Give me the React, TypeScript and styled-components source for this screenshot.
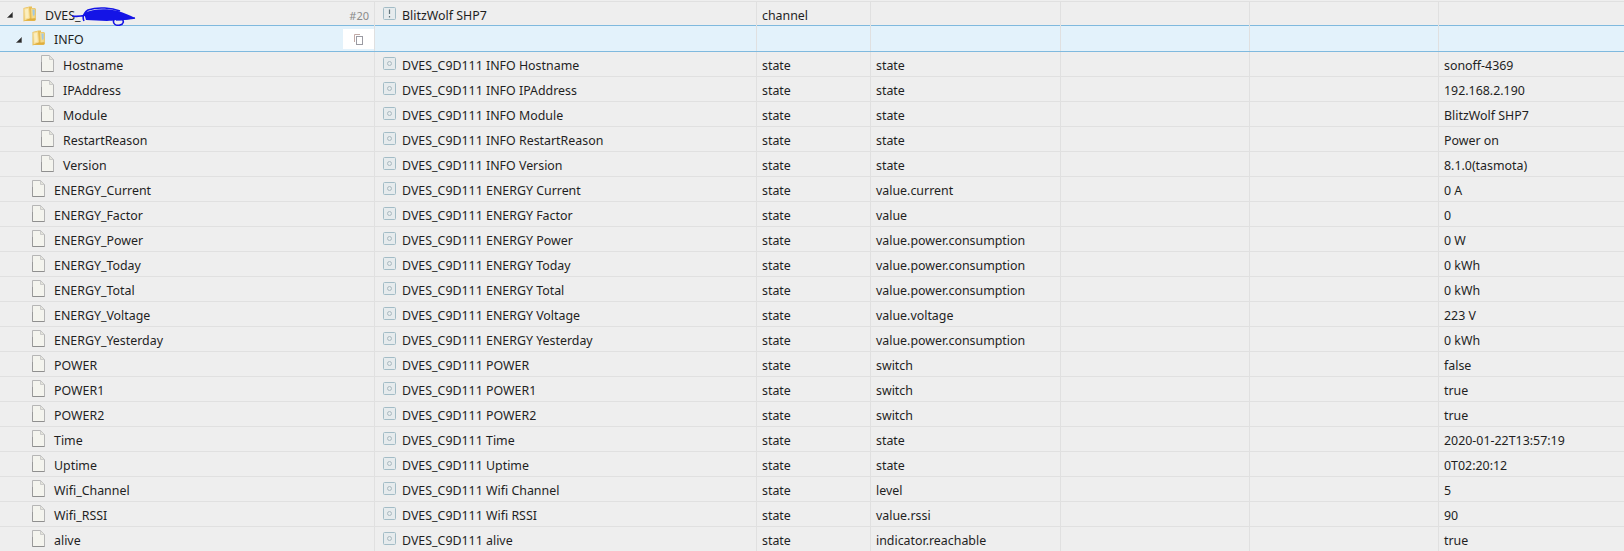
import styled, { createGlobalStyle } from "styled-components";

type Item = {
  name: string;
  indent: number;
  label: string;
  role: string;
  value: string;
};

const Info = (name: string, role: string, value: string): Item => ({
  name,
  indent: 41,
  label: "DVES_C9D111 INFO " + name,
  role,
  value,
});

const State = (name: string, role: string, value: string): Item => ({
  name,
  indent: 32,
  label: "DVES_C9D111 " + name.replace("_", " "),
  role,
  value,
});

const items: Item[] = [
  Info("Hostname", "state", "sonoff-4369"),
  Info("IPAddress", "state", "192.168.2.190"),
  Info("Module", "state", "BlitzWolf SHP7"),
  Info("RestartReason", "state", "Power on"),
  Info("Version", "state", "8.1.0(tasmota)"),
  State("ENERGY_Current", "value.current", "0 A"),
  State("ENERGY_Factor", "value", "0"),
  State("ENERGY_Power", "value.power.consumption", "0 W"),
  State("ENERGY_Today", "value.power.consumption", "0 kWh"),
  State("ENERGY_Total", "value.power.consumption", "0 kWh"),
  State("ENERGY_Voltage", "value.voltage", "223 V"),
  State("ENERGY_Yesterday", "value.power.consumption", "0 kWh"),
  State("POWER", "switch", "false"),
  State("POWER1", "switch", "true"),
  State("POWER2", "switch", "true"),
  State("Time", "state", "2020-01-22T13:57:19"),
  State("Uptime", "state", "0T02:20:12"),
  State("Wifi_Channel", "level", "5"),
  State("Wifi_RSSI", "value.rssi", "90"),
  State("alive", "indicator.reachable", "true"),
];

const Arrow = () => (
  <ArrowSvg width="6" height="6" viewBox="0 0 6 6">
    <path d="M5.5 0.5V5.5H0.5Z" fill="#2a2a2a" stroke="#555" strokeWidth="0.6" />
  </ArrowSvg>
);

const Folder = () => (
  <IconSvg width="13" height="16" viewBox="0 0 13 16">
    <path d="M0.5 2L6.5 0.5H9V2H12L12.8 3V13.5L11.5 15H2L0.5 15.5Z" fill="#e8bd55" />
    <path d="M1 2.5L6 1.2L7 12.5L1.5 14.5Z" fill="#f6dd96" />
    <path d="M2 3.5L5 2.8L5.8 11.5L2.5 12.8Z" fill="#fbeebf" />
    <path d="M8 2.5H11.8V12L8.6 13.2Z" fill="#f2d98c" />
    <path d="M9.4 3.5H11.6V9L10 10Z" fill="#9fc8e4" />
    <path d="M1.5 14.5L7 12.5L12.5 12.5V14.5H2Z" fill="#dfae3f" />
  </IconSvg>
);

const FileIcon = () => (
  <IconSvg width="13" height="17" viewBox="0 0 13 17">
    <path d="M0.5 0.5H8.5L12.5 4.5V16.5H0.5Z" fill="#f4f4ee" stroke="#b5b5b5" />
    <path d="M8.5 0.5V4.5H12.5Z" fill="#e4e4dc" stroke="#c4c4c4" strokeWidth="0.8" />
    <path d="M0.5 16.5H12.5" stroke="#8f8f8f" />
    <path d="M0.5 7V16.5" stroke="#9a9a9a" />
  </IconSvg>
);

const StateIcon = () => (
  <RowIcon width="13" height="13" viewBox="0 0 13 13">
    <rect x="0.5" y="0.5" width="12" height="12" rx="1" fill="#e6ebed" stroke="#a3bcc6" />
    <circle cx="6.5" cy="6.5" r="2" fill="none" stroke="#a9b9c0" />
  </RowIcon>
);

const ChannelIcon = () => (
  <RowIcon width="13" height="13" viewBox="0 0 13 13">
    <rect x="0.5" y="0.5" width="12" height="12" rx="1" fill="#e6ebed" stroke="#a3bcc6" />
    <path d="M6.5 2.5V7" stroke="#63757c" strokeWidth="1.2" />
    <path d="M6.5 9V10.5" stroke="#63757c" strokeWidth="1.2" />
  </RowIcon>
);

const CopyIcon = () => (
  <svg width="9" height="11" viewBox="0 0 9 11">
    <path d="M0.5 8V0.5H6" fill="none" stroke="#c2aaa6" />
    <rect x="2.5" y="2.5" width="6" height="8" fill="none" stroke="#9a9aa2" />
  </svg>
);

const Scribble = () => (
  <ScribbleSvg width="64" height="20" viewBox="0 0 64 20">
    <path d="M12 6C20 2 34 1 46 4C52 6 58 8 63 11C54 13 48 14 44 13C36 15 24 13 14 13Z" fill="#1414e6" />
    <path
      d="M0 9C6 10 10 9 14 8M12 14C10 10 12 5 16 3C26 -0.5 40 1 48 4M42 12C40 17 44 19 48 18C52 17 52 14 50 12M44 13C50 12 58 12 63 11"
      fill="none"
      stroke="#1414e6"
      strokeWidth="1.6"
    />
  </ScribbleSvg>
);

export default function App() {
  return (
    <>
      <GlobalStyle />
      <Table>
        <Row>
          <NameCell $indent={7}>
            <Arrow />
            <Gap $width={10} />
            <Folder />
            <RowName>DVES_</RowName>
            <Scribble />
            <RowId>#20</RowId>
          </NameCell>
          <LabelCell>
            <ChannelIcon />
            BlitzWolf SHP7
          </LabelCell>
          <TypeCell>channel</TypeCell>
          <RoleCell />
          <EmptyCell />
          <EmptyCell />
          <ValueCell />
        </Row>
        <Row $selected>
          <NameCell $indent={16}>
            <Arrow />
            <Gap $width={10} />
            <Folder />
            <RowName>INFO</RowName>
            <CopyButton>
              <CopyIcon />
            </CopyButton>
          </NameCell>
          <LabelCell />
          <TypeCell />
          <RoleCell />
          <EmptyCell />
          <EmptyCell />
          <ValueCell />
        </Row>
        {items.map((item) => (
          <Row key={item.name}>
            <NameCell $indent={item.indent}>
              <FileIcon />
              <RowName>{item.name}</RowName>
            </NameCell>
            <LabelCell>
              <StateIcon />
              {item.label}
            </LabelCell>
            <TypeCell>state</TypeCell>
            <RoleCell>{item.role}</RoleCell>
            <EmptyCell />
            <EmptyCell />
            <ValueCell>{item.value}</ValueCell>
          </Row>
        ))}
      </Table>
    </>
  );
}

const GlobalStyle = createGlobalStyle`
  html, body {
    margin: 0;
    padding: 0;
    height: 100%;
    overflow: hidden;
    background-color: #eeeeee;
  }
  body {
    font-family: "Noto Sans", "Open Sans", sans-serif;
    font-size: 12.4px;
    color: #1f1f1f;
  }
`;

const Table = styled.div`
  margin-top: 1px;
  border-top: 1px solid #e0e0e0;
`;

const Row = styled.div<{ $selected?: boolean }>`
  display: grid;
  grid-template-columns: 375px 382px 114px 190px 189px 189px 185px;
  box-sizing: border-box;
  height: ${(p) => (p.$selected ? "27px" : "25px")};
  margin-top: ${(p) => (p.$selected ? "-2px" : "0")};
  border-bottom: 1px solid ${(p) => (p.$selected ? "#7fb9de" : "#e0e0e0")};
  border-top: ${(p) => (p.$selected ? "1px solid #7fb9de" : "none")};
  background-color: ${(p) => (p.$selected ? "#e3f2fb" : "transparent")};
`;

const Cell = styled.div`
  display: flex;
  align-items: center;
  box-sizing: border-box;
  padding-left: 5px;
  padding-top: 2px;
  border-right: 1px solid #e0e0e0;
  white-space: nowrap;
  overflow: hidden;
`;

const NameCell = styled(Cell)<{ $indent: number }>`
  position: relative;
  padding-left: ${(p) => p.$indent}px;
`;

const LabelCell = styled(Cell)`
  padding-left: 8px;
`;

const TypeCell = styled(Cell)``;

const RoleCell = styled(Cell)``;

const EmptyCell = styled(Cell)``;

const ValueCell = styled(Cell)`
  border-right: none;
`;

const RowName = styled.span`
  margin-left: 9px;
`;

const RowId = styled.span`
  position: absolute;
  right: 5px;
  top: 6px;
  color: #8a8a8a;
  font-size: 11px;
`;

const Gap = styled.span<{ $width: number }>`
  display: inline-block;
  flex: none;
  width: ${(p) => p.$width}px;
`;

const ArrowSvg = styled.svg`
  flex: none;
`;

const IconSvg = styled.svg`
  flex: none;
  margin-top: -3px;
`;

const RowIcon = styled.svg`
  flex: none;
  margin: -4px 6px 0 0;
`;

const ScribbleSvg = styled.svg`
  position: absolute;
  left: 72px;
  top: 5px;
`;

const CopyButton = styled.div`
  position: absolute;
  right: 0;
  top: 3px;
  width: 31px;
  height: 20px;
  display: flex;
  align-items: center;
  justify-content: center;
  background-color: #fff;
`;
